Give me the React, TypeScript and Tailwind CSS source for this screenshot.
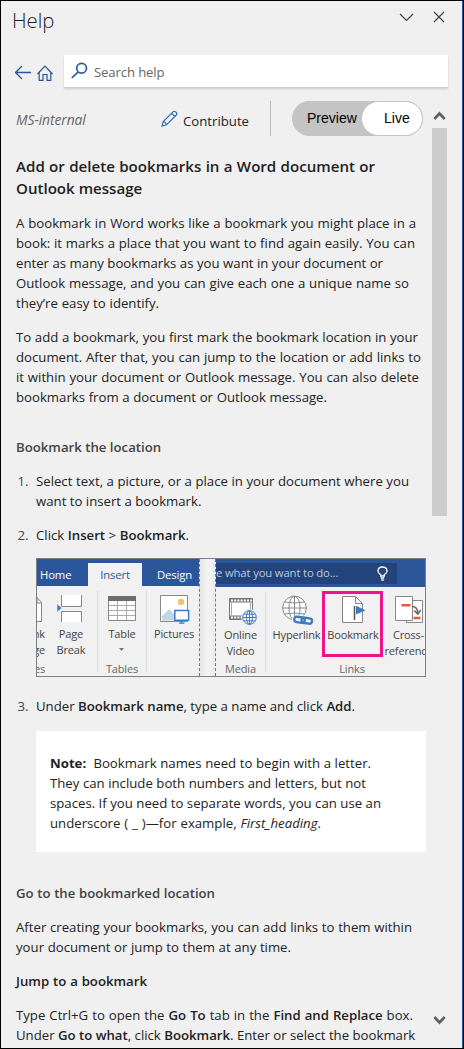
import type { ReactNode } from "react";
import clsx from "clsx";

function Line({ w, children }: { w: string; children: ReactNode }) {
  return (
    <span className={clsx("block whitespace-nowrap [text-align-last:justify]", w)}>{children}</span>
  );
}

function B({ children }: { children: ReactNode }) {
  return <b className="font-semibold">{children}</b>;
}

function Header() {
  return (
    <header className="flex h-[54px] items-start justify-between pr-[17px] pl-[11px]">
      <h1 className="pt-[6px] text-[20.3px] leading-[27px] font-light text-[#222]">Help</h1>
      <div className="flex items-center gap-[19px] pt-[10px]">
        <svg width="15" height="12" viewBox="0 0 15 12" fill="none" stroke="#444" strokeWidth="1.2">
          <path d="M1 3l6.5 6.5L14 3" />
        </svg>
        <svg width="12" height="12" viewBox="0 0 12 12" fill="none" stroke="#444" strokeWidth="1.2">
          <path d="M1 1l10 10M11 1L1 11" />
        </svg>
      </div>
    </header>
  );
}

function SearchRow() {
  return (
    <div className="flex h-[32px] pl-[14px]">
      <svg className="mt-[10px]" width="17" height="16" viewBox="0 0 17 16" fill="none" stroke="#2b579a" strokeWidth="1.3">
        <path d="M16 7.5H.5M7 1L.5 7.5L7 14" />
      </svg>
      <svg className="mt-[10px] ml-[5px]" width="17" height="17" viewBox="0 0 17 17" fill="none" stroke="#2b579a" strokeWidth="1.2">
        <path d="M.4 9L8 1.2L15.6 9M2.2 7.5V15.4H6V9.5H10V15.4H13.8V7.5" />
      </svg>
      <div className="ml-[10px] flex h-[32px] w-[384px] items-center bg-white pl-[7px] text-[13.1px] text-[#666] shadow-[0_2px_2px_rgba(0,0,0,0.16)]">
        <svg className="-mt-[2px]" width="17" height="17" viewBox="0 0 17 17" fill="none" stroke="#2b579a" strokeWidth="1.7">
          <circle cx="10.6" cy="6.2" r="4.9" />
          <path d="M7.2 9.8L.8 16" />
        </svg>
        <span className="mt-[1px] ml-[6px] tracking-[-0.1px]">Search help</span>
      </div>
    </div>
  );
}

function CommandRow() {
  return (
    <div className="flex h-[35px] items-center">
      <span className="w-[145px] shrink-0 text-[13.8px] text-[#666] italic">
        <span className="block pt-[3px] tracking-[-0.05px]">MS-internal</span>
      </span>
      <svg className="shrink-0" width="17" height="18" viewBox="0 0 17 18" fill="none" stroke="#2b6cb8" strokeWidth="1.2">
        <path d="M1 16.2L2.3 11.5L12.2 1.6Q13.2.8 14.4 1.8L15.3 2.7Q16.3 3.9 15.3 5L5.5 14.8ZM2.3 11.5Q4.8 12 5.5 14.8M10.6 3.2L13.8 6.5" />
      </svg>
      <span className="ml-[5px] w-[87px] shrink-0 pt-[4px]">Contribute</span>
      <div className="h-[35px] w-px shrink-0 bg-[#bdbdbd]" />
      <div className="ml-[21px] flex h-[35px] w-[131px] shrink-0 rounded-full bg-[#c4c4c4] font-['Liberation_Sans',sans-serif] text-[14px] text-black">
        <span className="w-[69px] pl-[15px] leading-[34px]">Preview</span>
        <span className="w-[62px] rounded-full border border-[#c4c4c4] bg-white pl-[22px] leading-[32px]">Live</span>
      </div>
    </div>
  );
}

function Scrollbar() {
  return (
    <div className="flex w-[15px] flex-col items-center pb-[22px]">
      <svg className="mt-[9px]" width="13" height="11" viewBox="0 0 13 11" fill="none" stroke="#606060" strokeWidth="2.6">
        <path d="M1.3 9L6.5 3.5L11.7 9" />
      </svg>
      <div className="mt-[7px] h-[388px] w-[15px] bg-[#cdcdcd]" />
      <svg className="mt-auto" width="13" height="11" viewBox="0 0 13 11" fill="none" stroke="#606060" strokeWidth="2.6">
        <path d="M1.3 2L6.5 7.5L11.7 2" />
      </svg>
    </div>
  );
}

function RibbonItem({ w, icon, label }: { w: string; icon: ReactNode; label: ReactNode }) {
  return (
    <div className={clsx("flex shrink-0 flex-col items-center text-center whitespace-nowrap", w)}>
      {icon}
      <div className="mt-[2px] leading-[15.5px]">{label}</div>
    </div>
  );
}

function Group({ w, name, children }: { w: string; name: string; children: ReactNode }) {
  return (
    <div className={clsx("flex shrink-0 flex-col justify-between", w)}>
      <div className="flex">{children}</div>
      <div className="text-center leading-[15px] text-[#666]">{name}</div>
    </div>
  );
}

const Sep = () => <div className="mt-[-3px] mb-[4px] w-px shrink-0 bg-[#d8d8d8]" />;

function LeftRibbon() {
  return (
    <div className="flex w-[163px] flex-col overflow-hidden border-r border-dashed border-[#777]">
      <div className="flex h-[27px] shrink-0 items-end bg-[#2b579a] text-[11.3px] text-white">
        <span className="w-[51px] pl-[3px] leading-[22px]">Home</span>
        <span className="h-[23px] w-[54px] bg-[#f1f1f1] text-center leading-[23px] text-[#2b579a]">Insert</span>
        <span className="pl-[15px] leading-[22px]">Design</span>
      </div>
      <div className="flex flex-1 pt-[8px]">
        <div className="flex w-[8px] shrink-0 flex-col items-end justify-between">
          <div className="flex flex-col items-end">
            <svg width="8" height="30" viewBox="37 594 8 30" fill="#fff" stroke="#888">
              <path d="M34 597.5H37L41.5 602.5V621.5H34M37 597V603H41.5" />
            </svg>
            <div className="mt-[2px] text-right leading-[15.5px]">
              <div>nk</div>
              <div>ge</div>
            </div>
          </div>
          <div className="leading-[15px] text-[#666]">es</div>
        </div>
        <RibbonItem
          w="w-[52px]"
          icon={
            <svg width="32" height="30" viewBox="55 594 32 30" fill="#fff" stroke="#888">
              <path d="M61.5 595V606.5H81.5V595M61.5 622V611.5H81.5V622" />
              <path d="M57.3 604.3L61.5 608L57.3 611.7Z" fill="#3c7bc0" stroke="none" />
            </svg>
          }
          label={<>Page<br />Break</>}
        />
        <Sep />
        <Group w="w-[48px]" name="Tables">
          <RibbonItem
            w="w-[48px]"
            icon={
              <svg width="30" height="30" viewBox="107 594 30 30" fill="#fff" stroke="#888">
                <path d="M108.5 596.5H135.5V620.5H108.5Z" />
                <path d="M117.5 601V620M126.5 601V620M109 605.5H135M109 610.5H135M109 615.5H135" stroke="#aaa" />
                <path d="M108 596H136V601H108Z" fill="#6e6e6e" stroke="none" />
              </svg>
            }
            label={
              <>
                Table
                <svg className="mx-auto mt-[6px]" width="5" height="3" viewBox="0 0 5 3" fill="#777">
                  <path d="M0 0H5L2.5 3Z" />
                </svg>
              </>
            }
          />
        </Group>
        <Sep />
        <RibbonItem
          w="w-[54px]"
          icon={
            <svg width="32" height="30" viewBox="158 594 32 30" fill="#fff" stroke="#888">
              <path d="M160.5 595.5H187.5V621.5H160.5Z" />
              <path d="M162 620.5V616L169 609L175 615V620.5Z" fill="#c3d6e8" stroke="none" />
              <circle cx="181" cy="602" r="3.2" fill="#f0c36d" stroke="none" />
              <path d="M174.8 610.5H188.6V620.3H174.8Z" stroke="#3c7bc0" strokeWidth="1.5" />
              <path d="M181.7 620.5V623M179 623.2H184.5" stroke="#3c7bc0" strokeWidth="1.2" />
            </svg>
          }
          label="Pictures"
        />
      </div>
    </div>
  );
}

function RightRibbon() {
  return (
    <div className="relative flex w-[210px] flex-col overflow-hidden border-l border-dashed border-[#777]">
      <div className="flex h-[28px] shrink-0 items-center bg-[#2b579a]">
        <div className="flex h-[21px] w-[181px] items-center bg-[#22447b] text-[11.3px] text-[#b9c8e0]">
          <span className="w-[161px] whitespace-nowrap">e what you want to do...</span>
          <svg width="11" height="15" viewBox="0 0 11 15" fill="none" stroke="#fff" strokeWidth="1.3">
            <path d="M3.7 10V8.7Q1 7.3 1 4.9Q1.2 1 5.5 1Q9.8 1 10 4.9Q10 7.3 7.3 8.7V10ZM3.7 12H7.3M4.3 14H6.7" />
          </svg>
        </div>
      </div>
      <div className="flex flex-1 pt-[8px]">
        <Group w="w-[49px]" name="Media">
          <RibbonItem
            w="w-[49px]"
            icon={
              <svg width="34" height="30" viewBox="223 595 34 30" fill="none">
                <path d="M228.5 598.5H251.5V619.5H228.5Z" fill="#fff" stroke="#777" />
                <path d="M228.5 600.5H251.5M228.5 617.5H251.5" stroke="#777" strokeWidth="4" />
                <path d="M230 600.5H251M230 617.5H251" stroke="#fff" strokeWidth="2" strokeDasharray="2 1.2" />
                <path d="M230.5 603V615M249.5 603V615" stroke="#aaa" />
                <circle cx="248.5" cy="617.5" r="8.2" fill="#f1f1f1" />
                <g stroke="#3c7bc0">
                  <circle cx="248.5" cy="617.5" r="6.8" fill="#fff" />
                  <ellipse cx="248.5" cy="617.5" rx="3" ry="6.8" />
                  <path d="M248.5 611V624.5M242 617.5H255M243 614.2H254M243 620.8H254" />
                </g>
              </svg>
            }
            label={<>Online<br />Video</>}
          />
        </Group>
        <Sep />
        <Group w="w-[172px]" name="Links">
          <RibbonItem
            w="w-[61px]"
            icon={
              <svg width="34" height="30" viewBox="280 595 34 30" fill="none">
                <g stroke="#888">
                  <circle cx="294.5" cy="608" r="11.8" fill="#fff" />
                  <ellipse cx="294.5" cy="608" rx="5.6" ry="11.8" />
                  <path d="M294.5 596V620M282.5 608H306.5M284.5 602Q294.5 604 304.5 602M284.5 614Q294.5 612 304.5 614" />
                </g>
                <g stroke="#f1f1f1" strokeWidth="5">
                  <rect x="294" y="617.4" width="10" height="6.2" rx="3.1" />
                  <rect x="302" y="617.4" width="10" height="6.2" rx="3.1" />
                </g>
                <g stroke="#3c7bc0" strokeWidth="2.3">
                  <rect x="294.2" y="617" width="10.5" height="5.4" rx="2.7" transform="rotate(8 299 620)" />
                  <rect x="301.5" y="618" width="10.5" height="5.4" rx="2.7" transform="rotate(8 307 621)" />
                </g>
              </svg>
            }
            label="Hyperlink"
          />
          <RibbonItem
            w="w-[52px]"
            icon={
              <svg width="32" height="30" viewBox="337 595 32 30" fill="#fff" stroke="#888">
                <path d="M342.5 596.5H355.5L362.5 603.5V622.5H342.5ZM355.5 596.5V603.5H362.5" />
                <path d="M354.5 606V620" stroke="#555" strokeWidth="1.5" />
                <path d="M356 605.8L365.5 610.2L356 614.6Z" fill="#3c7bc0" stroke="none" />
              </svg>
            }
            label="Bookmark"
          />
          <RibbonItem
            w="w-[59px]"
            icon={
              <svg width="34" height="30" viewBox="391 595 34 30" fill="#fff" stroke="#888">
                <path d="M405.5 600.5H421.5V622.5H405.5Z" />
                <path d="M394.5 596.5H411.5V620.5H394.5Z" />
                <path d="M400.5 605.3H409.5M412.5 618H419.5" stroke="#dc5f3c" strokeWidth="2.6" />
                <path d="M411 606.5Q416.5 606.5 416.8 613M413.2 610.5L416.8 614L419.8 610" fill="none" stroke="#666" strokeWidth="1.5" />
              </svg>
            }
            label={<>Cross-<br />reference</>}
          />
        </Group>
      </div>
      <div className="absolute top-[32px] left-[106px] h-[66px] w-[61px] border-[3px] border-[#f0148c]" />
    </div>
  );
}

function RibbonFigure() {
  return (
    <figure className="mt-[13px] flex h-[119px] w-[390px] border border-[#808080] bg-[#f1f1f1] text-[11px] tracking-[-0.15px] text-[#444]">
      <LeftRibbon />
      <div className="w-[15px] bg-linear-to-r from-[#e6e6e6] via-[#f4f4f4] to-[#ececec]" />
      <RightRibbon />
    </figure>
  );
}

function Step({ n, children }: { n: number; children: ReactNode }) {
  return (
    <li className="flex">
      <span className="w-[20px] shrink-0 pl-[1.5px] text-[#444]">{n}.</span>
      <div>{children}</div>
    </li>
  );
}

function Article() {
  return (
    <article>
      <h2 className="mt-[19px] text-[15.1px] leading-[22px] font-semibold">
        <Line w="w-[359px]">Add or delete bookmarks in a Word document or</Line>
        <Line w="w-[126px]">Outlook message</Line>
      </h2>
      <p className="mt-[14px]">
        <Line w="w-[400px]">A bookmark in Word works like a bookmark you might place in a</Line>
        <Line w="w-[399px]">book: it marks a place that you want to find again easily. You can</Line>
        <Line w="w-[367px]">enter as many bookmarks as you want in your document or</Line>
        <Line w="w-[393px]">Outlook message, and you can give each one a unique name so</Line>
        <Line w="w-[143px]">they’re easy to identify.</Line>
      </p>
      <p className="mt-[14px]">
        <Line w="w-[402px]">To add a bookmark, you first mark the bookmark location in your</Line>
        <Line w="w-[405px]">document. After that, you can jump to the location or add links to</Line>
        <Line w="w-[403px]">it within your document or Outlook message. You can also delete</Line>
        <Line w="w-[311px]">bookmarks from a document or Outlook message.</Line>
      </p>
      <h3 className="mt-[30px] font-semibold text-[#444]">
        <Line w="w-[144px]">Bookmark the location</Line>
      </h3>
      <ol className="mt-[14px] flex flex-col">
        <Step n={1}>
          <Line w="w-[373px]">Select text, a picture, or a place in your document where you</Line>
          <Line w="w-[165px]">want to insert a bookmark.</Line>
        </Step>
        <li className="h-[14px]" aria-hidden />
        <Step n={2}>
          <Line w="w-[153px]">Click <B>Insert</B> &gt; <B>Bookmark</B>.</Line>
          <RibbonFigure />
        </Step>
        <li className="h-[19px]" aria-hidden />
        <Step n={3}>
          <Line w="w-[319px]">Under <B>Bookmark name</B>, type a name and click <B>Add</B>.</Line>
          <aside className="mt-[15px] h-[121px] w-[390px] bg-white px-[14px] py-[22px]">
            <Line w="w-[321px]"><b className="font-bold">Note:</b>&nbsp; Bookmark names need to begin with a letter.</Line>
            <Line w="w-[316px]">They can include both numbers and letters, but not</Line>
            <Line w="w-[331px]">spaces. If you need to separate words, you can use an</Line>
            <Line w="w-[271px]">underscore ( _ )—for example, <i>First_heading</i>.</Line>
          </aside>
        </Step>
      </ol>
      <h3 className="mt-[31px] font-semibold text-[#444]">
        <Line w="w-[199px]">Go to the bookmarked location</Line>
      </h3>
      <p className="mt-[14px]">
        <Line w="w-[396px]">After creating your bookmarks, you can add links to them within</Line>
        <Line w="w-[275px]">your document or jump to them at any time.</Line>
      </p>
      <h4 className="mt-[14px] font-semibold">
        <Line w="w-[131px]">Jump to a bookmark</Line>
      </h4>
      <p className="mt-[14px]">
        <Line w="w-[397px]">Type Ctrl+G to open the <B>Go To</B> tab in the <B>Find and Replace</B> box.</Line>
        <Line w="w-[399px]">Under <B>Go to what</B>, click <B>Bookmark</B>. Enter or select the bookmark</Line>
      </p>
    </article>
  );
}

export default function App() {
  return (
    <div className="flex h-[1049px] w-[464px] border border-black bg-[#f0f0f0] font-['Open_Sans','Noto_Sans',sans-serif] text-[13.2px] leading-[20px] text-[#222]">
      <div className="flex min-w-0 flex-1 flex-col">
        <Header />
        <SearchRow />
        <div className="mt-[14px] flex min-h-0 flex-1">
          <main className="w-[431px] shrink-0 overflow-hidden pl-[15px]">
            <CommandRow />
            <Article />
          </main>
          <Scrollbar />
        </div>
      </div>
      <div className="w-px bg-[#2b579a]" />
    </div>
  );
}
